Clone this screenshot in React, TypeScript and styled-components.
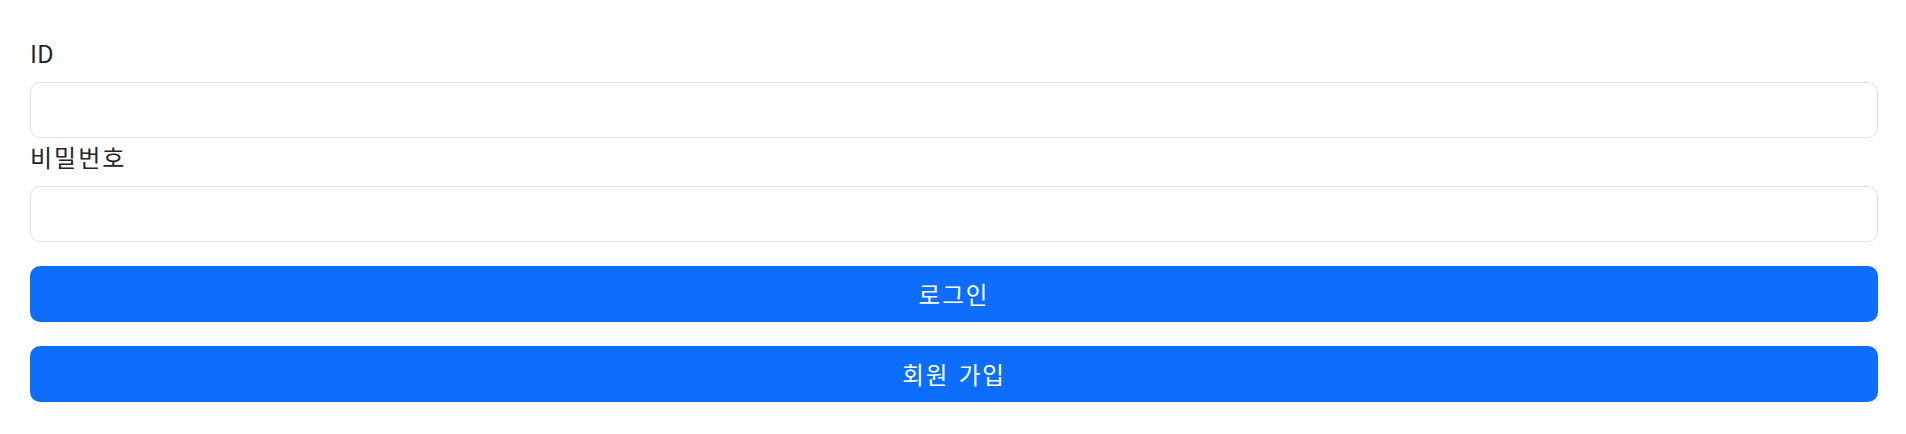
import React from "react";
import styled, { createGlobalStyle } from "styled-components";

const GlobalStyle = createGlobalStyle`
  html, body { margin: 0; padding: 0; background: #ffffff; }
  body {
    font-family: "Noto Sans CJK KR", "Noto Sans", sans-serif;
    color: #212529;
  }
  * { box-sizing: border-box; }
`;

const Form = styled.form`
  display: flex;
  flex-direction: column;
  padding: 34px 28px 0 30px;
`;

const Label = styled.label<{ $hangul?: boolean }>`
  display: block;
  font-size: 24px;
  line-height: 38px;
  letter-spacing: ${(p) => (p.$hangul ? "2px" : "0")};
  margin-bottom: 10px;
  color: #212529;
`;

const Input = styled.input`
  display: block;
  width: 100%;
  height: 56px;
  border: 1px solid #dee2e6;
  border-radius: 10px;
  background: #ffffff;
  padding: 0 16px;
  font-size: 24px;
  font-family: inherit;
  outline: none;
`;

const ButtonGroup = styled.div`
  display: flex;
  flex-direction: column;
  gap: 24px;
  margin-top: 24px;
`;

const Button = styled.button`
  display: flex;
  align-items: center;
  justify-content: center;
  width: 100%;
  height: 56px;
  border: none;
  border-radius: 10px;
  background: #0d6efd;
  color: #ffffff;
  font-family: inherit;
  font-size: 23.5px;
  letter-spacing: 2px;
  word-spacing: 2px;
  cursor: pointer;
`;

export default function App() {
  return (
    <>
      <GlobalStyle />
      <Form onSubmit={(e) => e.preventDefault()}>
        <Label htmlFor="userId">ID</Label>
        <Input id="userId" type="text" />
        <Label htmlFor="userPw" $hangul>
          비밀번호
        </Label>
        <Input id="userPw" type="password" />
        <ButtonGroup>
          <Button type="submit">로그인</Button>
          <Button type="button">회원 가입</Button>
        </ButtonGroup>
      </Form>
    </>
  );
}
